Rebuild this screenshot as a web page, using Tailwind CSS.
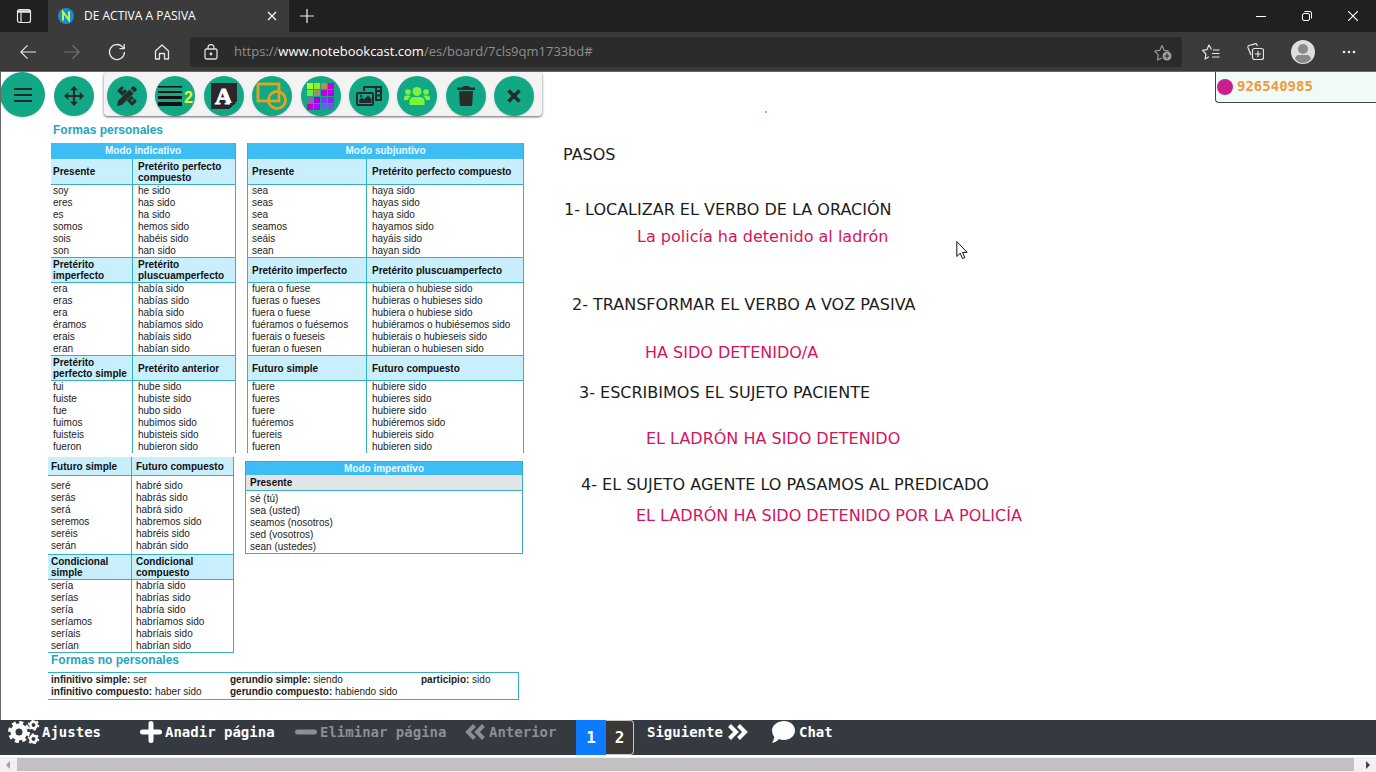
<!DOCTYPE html>
<html lang="es">
<head>
    <meta charset="UTF-8">
    <meta name="viewport" content="width=device-width, initial-scale=1.0">
    <title>DE ACTIVA A PASIVA</title>
    <script src="https://cdn.jsdelivr.net/npm/@tailwindcss/browser@4"></script>
</head>
<body class="h-screen flex flex-col overflow-hidden bg-white font-['Open_Sans','Noto_Sans',sans-serif]">

<!-- Tab strip -->
<header class="bg-[#202020] text-white">
    <div class="flex items-stretch h-8">
        <button aria-label="Pestañas verticales" class="w-12 flex items-center justify-center">
            <svg class="size-4" viewBox="0 0 16 16" fill="none" stroke="#e8e8e8" stroke-width="1.2"><rect x="1.5" y="1.5" width="13" height="13" rx="2"/><path d="M1.5 3.500h13" stroke-width="2.500"/><path d="M5 5v9"/></svg>
        </button>
        <div class="w-[241px] bg-[#3b3b3b] flex items-center pl-2.5 pr-3">
            <svg class="size-4 mr-2.5" viewBox="0 0 16 16"><circle cx="8" cy="8" r="8" fill="#1590cf"/><path d="M5 12.500V4l6 8V3.500" fill="none" stroke="#c9f04a" stroke-width="2"/></svg>
            <span class="text-xs flex-1">DE ACTIVA A PASIVA</span>
            <button aria-label="Cerrar pestaña"><svg class="size-2.5" viewBox="0 0 10 10" stroke="#fff" stroke-width="1.3"><path d="M1 1l8 8M9 1L1 9"/></svg></button>
        </div>
        <button aria-label="Nueva pestaña" class="w-9 flex items-center justify-center"><svg class="size-3.5" viewBox="0 0 14 14" stroke="#eee" stroke-width="1.2"><path d="M7 0v14M0 7h14"/></svg></button>
        <div class="ml-auto flex">
            <button aria-label="Minimizar" class="w-[46px] flex items-center justify-center"><svg class="size-2.5" viewBox="0 0 10 10" stroke="#fff"><path d="M0 5.500h10"/></svg></button>
            <button aria-label="Restaurar" class="w-[46px] flex items-center justify-center"><svg class="size-2.5" viewBox="0 0 10 10" fill="none" stroke="#fff"><rect x=".5" y="2.500" width="7" height="7" rx="1.500"/><path d="M2.500 .5H8a1.500 1.500 0 0 1 1.500 1.500v5.500"/></svg></button>
            <button aria-label="Cerrar" class="w-[46px] flex items-center justify-center"><svg class="size-2.5" viewBox="0 0 10 10" stroke="#fff" stroke-width="1.2"><path d="M0 0l10 10M10 0L0 10"/></svg></button>
        </div>
    </div>

    <!-- Address bar -->
    <div class="flex items-center h-10 bg-[#3b3b3b] border-b border-[#666]">
        <nav class="w-[190px] flex items-center gap-7 pl-5">
            <button aria-label="Atrás"><svg class="size-4" viewBox="0 0 16 16" fill="none" stroke="#e6e6e6" stroke-width="1.2"><path d="M16 8H.8M7.500 1.300L.8 8l6.700 6.700"/></svg></button>
            <button aria-label="Adelante" disabled><svg class="size-4" viewBox="0 0 16 16" fill="none" stroke="#777" stroke-width="1.2"><path d="M0 8h15.200M8.500 1.300L15.200 8l-6.700 6.700"/></svg></button>
            <button aria-label="Actualizar"><svg class="size-[18px]" viewBox="0 0 18 18" fill="none" stroke="#e6e6e6" stroke-width="1.3"><path d="M16.500 9a7.500 7.500 0 1 1-2.300-5.400L16 5.500M16.200 1v4.700h-4.700"/></svg></button>
            <button aria-label="Inicio"><svg class="size-4" viewBox="0 0 16 16" fill="none" stroke="#e6e6e6" stroke-width="1.3"><path d="M1.500 7L8 1l6.500 6v8h-4V9.500h-5V15h-4z" stroke-linejoin="round"/></svg></button>
        </nav>
        <div class="flex-1 h-[30px] rounded-sm bg-[#2b2b2b] flex items-center pl-3.5 pr-2.5">
            <svg class="w-3.5 h-4 mr-4" viewBox="0 0 14 16" fill="none" stroke="#ddd" stroke-width="1.3"><rect x="1" y="5" width="12" height="10" rx="1.500"/><path d="M4 5V3.500a3 3 0 0 1 6 0V5"/><circle cx="7" cy="10" r=".8" fill="#ddd"/></svg>
            <a href="#" class="text-[13px] text-[#8f8f8f] flex-1">https://<span class="text-white">www.notebookcast.com</span>/es/board/7cls9qm1733bd#</a>
            <button aria-label="Agregar a favoritos"><svg class="size-[18px]" viewBox="0 0 18 18" fill="none" stroke="#999" stroke-width="1.2"><path d="M8 15l-4.500 2 .8-5.200L.8 8.200l4.900-.8L8 2.500l2.300 4.900 4.500.7" stroke-linejoin="round"/><circle cx="13" cy="13" r="4.500" fill="#a0a0a0" stroke="none"/><path d="M13 10.500v5M10.500 13h5" stroke="#2b2b2b"/></svg></button>
        </div>
        <div class="flex items-center gap-[27px] pl-5 pr-5">
            <button aria-label="Favoritos"><svg class="w-[18px] h-4" viewBox="0 0 18 16" fill="none" stroke="#e6e6e6" stroke-width="1.2"><path d="M9.500 5.500L7 1 5 5.600l-4.500.7L3.900 10l-.8 5L7 12.700M11 6h6.500M10 9.500h7.500M10 13h7.500" stroke-linejoin="round"/></svg></button>
            <button aria-label="Colecciones"><svg class="size-[17px]" viewBox="0 0 17 17" fill="none" stroke="#e6e6e6" stroke-width="1.200"><path d="M4 12L1 4.500Q.5 3 2 2.500L8 .8q1.500-.4 2 1l.5 1.200"/><rect x="5.500" y="5.500" width="11" height="11" rx="2"/><path d="M11 8v6M8 11h6"/></svg></button>
            <button aria-label="Perfil"><svg class="size-6" viewBox="0 0 24 24"><circle cx="12" cy="12" r="12" fill="#dedede"/><circle cx="12" cy="9" r="5" fill="#8a8a8a"/><path d="M4 19q1-4 4-4h8q3 0 4 4-3.500 4-8 4t-8-4z" fill="#8a8a8a"/></svg></button>
            <button aria-label="Más"><svg class="w-3.5 h-4" viewBox="0 0 14 16" fill="#eee"><circle cx="2" cy="8" r="1.300"/><circle cx="7" cy="8" r="1.300"/><circle cx="12" cy="8" r="1.300"/></svg></button>
        </div>
    </div>
</header>

<main class="relative flex-1 min-h-0 border-l border-[#666] bg-white overflow-hidden">
    <!-- Drawing tools -->
    <div class="flex items-start -ml-px">
        <button aria-label="Menú" class="size-[45px] rounded-full bg-[#12a785] shadow flex items-center justify-center">
            <svg class="w-[18px] h-4" viewBox="0 0 18 16" stroke="#222b2b" stroke-width="2.200"><path d="M0 2h18M0 8h18M0 14h18"/></svg>
        </button>
        <button aria-label="Mover" class="size-10 mt-1 ml-[9px] mr-2.5 rounded-full bg-[#12a785] shadow flex items-center justify-center">
            <svg class="size-5" viewBox="0 0 20 20" fill="#222b2b"><path d="M10 0l4 4.300h-2.900v4.600h4.600V6L20 10l-4.300 4v-2.900h-4.600v4.600H14L10 20l-4-4.300h2.900v-4.600H4.300V14L0 10l4.300-4v2.900h4.600V4.300H6z"/></svg>
        </button>
        <div class="w-[438px] h-11 flex items-center justify-between pt-1 pl-[3px] pr-2 bg-[#f3f3f3] rounded-sm shadow-sm shadow-black/50">
            <button aria-label="Lápiz" class="size-10 rounded-full bg-[#12a785] shadow flex items-center justify-center">
                <svg class="size-5" viewBox="0 0 20 20" fill="#2b2b2b"><path d="M0 20l1.200-5.200L12.600 3.400l4 4L5.200 18.800z"/><path d="M13.600 2.400L15.200.8q1.200-1.200 2.400 0l1.600 1.600q1.200 1.200 0 2.400l-1.600 1.600z"/><path d="M.8 4L4 .8q.8-.8 1.600 0l1.300 1.300-2.200 2.200 1 1L7.900 3.100l2.200 2.200-4.700 4.700L.8 5.600Q0 4.800.8 4zM14.700 9.900l4.500 4.500q.8.800 0 1.600L16 19.200q-.8.800-1.600 0l-4.500-4.500 2.200-2.200"/><path d="M16.800 12.800l-2.700 2.700" stroke="#12a785" stroke-width="1.300"/></svg>
            </button>
            <button aria-label="Grosor 2" class="size-10 rounded-full bg-[#12a785] shadow flex items-center justify-center gap-0.5">
                <svg class="w-6 h-5 shrink-0" viewBox="0 0 24 20" fill="#111"><path d="M0 0h24v1.500H0zM0 5h24v2H0zM0 10h24v3H0zM0 16h24v4H0z"/></svg>
                <span class="font-['Liberation_Sans',sans-serif] font-bold text-base text-[#e2ff20] pt-1">2</span>
            </button>
            <button aria-label="Texto" class="size-10 rounded-full bg-[#12a785] shadow flex items-center justify-center">
                <span class="relative size-[26px] bg-[#2b262a] text-white font-['Liberation_Serif',serif] font-bold text-2xl leading-[26px] [-webkit-text-stroke:1px_white]">A<svg class="absolute right-0 bottom-0 size-2" viewBox="0 0 8 8"><path d="M8 0v8H0z" fill="#12a785"/><path d="M1 7V2h6z" fill="#2b262a"/></svg></span>
            </button>
            <button aria-label="Formas" class="size-10 rounded-full bg-[#12a785] shadow flex items-center justify-center">
                <svg class="w-8 h-7" viewBox="0 0 32 28" fill="none" stroke="#dfa51c" stroke-width="2.800"><rect x="2" y="2" width="21" height="17"/><circle cx="21" cy="18" r="8.500"/></svg>
            </button>
            <button aria-label="Color" class="size-10 rounded-full bg-[#12a785] shadow flex items-center justify-center">
                <span class="grid grid-cols-4 gap-px">
                    <i class="size-1.5 bg-[#a4ff28]"></i><i class="size-1.5 bg-[#8cf020]"></i><i class="size-1.5 bg-[#b09050]"></i><i class="size-1.5 bg-[#c800d0]"></i>
                    <i class="size-1.5 bg-[#60f040]"></i><i class="size-1.5 bg-[#a09060]"></i><i class="size-1.5 bg-[#b800e0]"></i><i class="size-1.5 bg-[#b000e8]"></i>
                    <i class="size-1.5 bg-[#7870a0]"></i><i class="size-1.5 bg-[#a000f0]"></i><i class="size-1.5 bg-[#7040f0]"></i><i class="size-1.5 bg-[#9020f0]"></i>
                    <i class="size-1.5 bg-[#c000c8]"></i><i class="size-1.5 bg-[#a010f0]"></i><i class="size-1.5 bg-[#5070e0]"></i><i class="size-1.5 bg-[#6060d0]"></i>
                </span>
            </button>
            <button aria-label="Imágenes" class="size-10 rounded-full bg-[#12a785] shadow flex items-center justify-center">
                <svg class="w-[26px] h-5" viewBox="0 0 26 20" fill="none" stroke="#222b2b" stroke-width="2"><path d="M8 5V1h17v13h-6M20 1v13M20 5h5M20 9.500h5"/><rect x="1" y="7" width="16" height="12" rx="1"/><path d="M3 17v-3l3-2.500 2 2 4-4 3.500 3.500v4z" fill="#222b2b" stroke="none"/><circle cx="5" cy="10" r="1.200" fill="#222b2b" stroke="none"/></svg>
            </button>
            <button aria-label="Usuarios" class="size-10 rounded-full bg-[#12a785] shadow flex items-center justify-center">
                <svg class="w-[26px] h-[18px]" viewBox="0 0 26 18" fill="#7cf43a"><circle cx="13" cy="4.500" r="4.500"/><path d="M5.500 18v-3q0-5 4.500-5h6q4.500 0 4.500 5v3z"/><circle cx="4" cy="5" r="2.800"/><circle cx="22" cy="5" r="2.800"/><path d="M0 13v-2q0-2.500 2.500-2.500H6q1 0 1 .5-2.500 1.500-2.700 4zM26 13v-2q0-2.500-2.500-2.500H20q-1 0-1 .5 2.500 1.500 2.700 4z"/></svg>
            </button>
            <button aria-label="Borrar" class="size-10 rounded-full bg-[#12a785] shadow flex items-center justify-center">
                <svg class="w-[18px] h-5" viewBox="0 0 18 20" fill="#2b2b2b"><path d="M0 1.500h5L6.500 0h5L13 1.500h5V4H0zM2 5h14l-.8 13.500q-.1 1.500-1.500 1.500H4.300q-1.400 0-1.500-1.500z"/></svg>
            </button>
            <button aria-label="Cerrar herramientas" class="size-10 rounded-full bg-[#12a785] shadow flex items-center justify-center">
                <svg class="size-3.5" viewBox="0 0 14 14" stroke="#222b2b" stroke-width="3.500"><path d="M1.500 1.500l11 11M12.500 1.500l-11 11"/></svg>
            </button>
        </div>
    </div>

    <!-- Conjugation chart for "ser" -->
    <section class="w-[476px] ml-[47px] pt-1.5 font-['Liberation_Sans',sans-serif] text-[10px] leading-3 text-[#222]">
        <h2 class="pl-[5px] h-5 leading-[14px] text-xs font-bold text-[#22a5bf]">Formas personales</h2>
        <div class="flex justify-between pl-[3px]">
            <table id="indicativo" class="w-[185px] table-fixed border-separate border-spacing-0 border-r border-[#35b0c0]"></table>
            <table id="subjuntivo" class="w-[277px] table-fixed border-separate border-spacing-0 border-x border-[#35b0c0]"></table>
        </div>
        <div class="flex justify-between items-start pt-1">
            <table id="indicativo2" class="w-[186px] table-fixed border-separate border-spacing-0 border-r border-b border-[#35b0c0]"></table>
            <table id="imperativo" class="w-[278px] mt-1 mr-px table-fixed border-separate border-spacing-0 border border-[#35b0c0]"></table>
        </div>
        <h2 class="pl-[3px] h-[19px] leading-[14px] text-xs font-bold text-[#22a5bf]">Formas no personales</h2>
        <div class="w-[471px] grid grid-cols-[179px_191px_1fr] py-px pl-[3px] border-y border-r border-[#35b0c0]">
            <p><b>infinitivo simple:</b> ser</p>
            <p><b>gerundio simple:</b> siendo</p>
            <p><b>participio:</b> sido</p>
            <p><b>infinitivo compuesto:</b> haber sido</p>
            <p><b>gerundio compuesto:</b> habiendo sido</p>
        </div>
    </section>

    <!-- Notes placed on the board -->
    <div class="font-['DejaVu_Sans',sans-serif] text-base leading-5 text-[#1c1c1c] whitespace-nowrap">
        <p class="absolute left-[562px] top-[73px]">PASOS</p>
        <p class="absolute left-[563px] top-[128px]">1- LOCALIZAR EL VERBO DE LA ORACIÓN</p>
        <p class="absolute left-[636px] top-[155px] text-[#d4145f]">La policía ha detenido al ladrón</p>
        <p class="absolute left-[571px] top-[223px]">2- TRANSFORMAR EL VERBO A VOZ PASIVA</p>
        <p class="absolute left-[644px] top-[271px] text-[#d4145f]">HA SIDO DETENIDO/A</p>
        <p class="absolute left-[578px] top-[311px]">3- ESCRIBIMOS EL SUJETO PACIENTE</p>
        <p class="absolute left-[645px] top-[357px] text-[#d4145f]">EL LADRÓN HA SIDO DETENIDO</p>
        <p class="absolute left-[580px] top-[403px]">4- EL SUJETO AGENTE LO PASAMOS AL PREDICADO</p>
        <p class="absolute left-[635px] top-[434px] text-[#d4145f]">EL LADRÓN HA SIDO DETENIDO POR LA POLICÍA</p>
    </div>
    <span class="absolute left-[764px] top-[39px] size-0.5 rounded-full bg-[#4fb3a0]"></span>
    <svg class="absolute left-[955px] top-[168px] w-3 h-5" viewBox="0 0 12 20" fill="#fff" stroke="#111"><path d="M.8 1.500v15l3.400-3.300 2.300 5.400 2.300-1-2.300-5.200h4.600z"/></svg>

    <!-- Connected user -->
    <aside class="absolute right-0 top-0 w-[161px] h-[31px] border border-t-0 border-r-0 border-[#444] rounded-bl bg-[#f0faf6] flex items-start gap-1 pl-px pt-[5px]">
        <span class="size-4 mt-0.5 rounded-full bg-[#c9208c]"></span>
        <span class="font-['DejaVu_Sans_Mono',monospace] font-bold text-sm leading-[18px] text-[#f09a3e]">926540985</span>
    </aside>
</main>

<!-- Page controls -->
<footer class="font-['DejaVu_Sans_Mono',monospace]">
    <div class="h-[35px] bg-[#343a40] flex items-start text-white text-sm font-bold leading-6">
        <button class="flex items-center w-[132px] ml-2 gap-0.5">
            <svg class="w-8 h-6 shrink-0" viewBox="0 0 32 24" fill="none" stroke="#fff"><circle cx="11" cy="12" r="6" stroke-width="5"/><circle cx="11" cy="12" r="9.500" stroke-width="3" stroke-dasharray="4 3.460"/><circle cx="25.500" cy="5" r="3.200" stroke-width="2.500"/><circle cx="25.500" cy="5" r="5" stroke-width="1.500" stroke-dasharray="2.200 3.036"/><circle cx="25.500" cy="19" r="3.200" stroke-width="2.500"/><circle cx="25.500" cy="19" r="5" stroke-width="1.500" stroke-dasharray="2.200 3.036"/></svg>Ajustes
        </button>
        <button class="flex items-center w-[155px] gap-[3px]">
            <svg class="size-[22px] shrink-0" viewBox="0 0 22 22" stroke="#fff" stroke-width="5" stroke-linecap="round"><path d="M11 2.500v17M2.500 11h17"/></svg>Anadir página
        </button>
        <button disabled class="flex items-center w-[170px] gap-[3px] text-[#8b8f93]">
            <svg class="size-[22px] shrink-0" viewBox="0 0 22 22" stroke="#8b8f93" stroke-width="5" stroke-linecap="round"><path d="M2.500 11h17"/></svg>Eliminar página
        </button>
        <button disabled class="flex items-center w-[111px] gap-1 text-[#8b8f93]">
            <svg class="w-5 h-4 shrink-0" viewBox="0 0 20 16" fill="none" stroke="#8b8f93" stroke-width="4"><path d="M9.500 1.500L3 8l6.500 6.500M18.500 1.500L12 8l6.500 6.500"/></svg>Anterior
        </button>
        <button class="w-[30px] h-[35px] bg-[#0d7bff] text-base leading-[35px]">1</button>
        <button class="w-7 h-[35px] bg-[#3a3837] border border-l-0 border-[#c8c8c8] rounded-r text-base leading-[33px]">2</button>
        <button class="flex items-center gap-1 ml-[13px] w-[124px]">
            Siguiente<svg class="w-[22px] h-4 shrink-0" viewBox="0 0 20 16" fill="none" stroke="#fff" stroke-width="4"><path d="M1.500 1.500L8 8l-6.500 6.500M10.500 1.500L17 8l-6.500 6.500"/></svg>
        </button>
        <button class="flex items-center gap-1">
            <svg class="w-6 h-[22px] shrink-0" viewBox="0 0 24 22" fill="#fff"><path d="M13 0C19 0 24 4 24 9.500S19 19 13 19q-3 0-5-1-3 3.500-7 3.700 2-2.500 2.300-5.700Q1 13 1 9.500C1 4 7 0 13 0z"/></svg>Chat
        </button>
    </div>
    <div class="flex items-center h-[17px] bg-[#f1f1f1] border-t-2 border-white">
        <svg class="w-[17px] h-2 shrink-0" viewBox="0 0 17 8" fill="#a3a3a3"><path d="M10 0v8L6 4z"/></svg>
        <div class="flex-1 h-[13px] bg-[#c1c1c1]"></div>
        <svg class="w-[22px] h-2 shrink-0" viewBox="0 0 22 8" fill="#444"><path d="M12 0v8l4-4z"/></svg>
    </div>
</footer>

<script>
    const charts = {
        indicativo: {
            title: 'Modo indicativo', widths: ['82px', '102px'], pad: 'pl-0.5', second: 'pl-[5px]',
            groups: [
                ['Presente', 'Pretérito perfecto<br>compuesto', 'soy,eres,es,somos,sois,son', 'he sido,has sido,ha sido,hemos sido,habéis sido,han sido'],
                ['Pretérito<br>imperfecto', 'Pretérito<br>pluscuamperfecto', 'era,eras,era,éramos,erais,eran', 'había sido,habías sido,había sido,habíamos sido,habíais sido,habían sido'],
                ['Pretérito<br>perfecto simple', 'Pretérito anterior', 'fui,fuiste,fue,fuimos,fuisteis,fueron', 'hube sido,hubiste sido,hubo sido,hubimos sido,hubisteis sido,hubieron sido'],
            ],
        },
        subjuntivo: {
            title: 'Modo subjuntivo', widths: ['119px', '156px'], pad: 'pl-1', second: 'pl-[5px]',
            groups: [
                ['Presente', 'Pretérito perfecto compuesto', 'sea,seas,sea,seamos,seáis,sean', 'haya sido,hayas sido,haya sido,hayamos sido,hayáis sido,hayan sido'],
                ['Pretérito imperfecto', 'Pretérito pluscuamperfecto', 'fuera o fuese,fueras o fueses,fuera o fuese,fuéramos o fuésemos,fuerais o fueseis,fueran o fuesen', 'hubiera o hubiese sido,hubieras o hubieses sido,hubiera o hubiese sido,hubiéramos o hubiésemos sido,hubierais o hubieseis sido,hubieran o hubiesen sido'],
                ['Futuro simple', 'Futuro compuesto', 'fuere,fueres,fuere,fuéremos,fuereis,fueren', 'hubiere sido,hubieres sido,hubiere sido,hubiéremos sido,hubiereis sido,hubieren sido'],
            ],
        },
        indicativo2: {
            widths: ['84px', '101px'], pad: 'pl-[3px]', second: 'pl-1',
            groups: [
                ['Futuro simple', 'Futuro compuesto', 'seré,serás,será,seremos,seréis,serán', 'habré sido,habrás sido,habrá sido,habremos sido,habréis sido,habrán sido'],
                ['Condicional<br>simple', 'Condicional<br>compuesto', 'sería,serías,sería,seríamos,seríais,serían', 'habría sido,habrías sido,habría sido,habríamos sido,habríais sido,habrían sido'],
            ],
        },
        imperativo: {
            title: 'Modo imperativo', widths: ['276px'], pad: 'pl-1',
            groups: [['Presente', null, 'sé (tú),sea (usted),seamos (nosotros),sed (vosotros),sean (ustedes)', '']],
        },
    };

    for (const [id, chart] of Object.entries(charts)) {
        const single = chart.widths.length === 1;
        let html = '<colgroup>' + chart.widths.map(w => `<col style="width:${w}">`).join('') + '</colgroup>';
        if (chart.title) {
            const size = single ? 'h-[13px]' : 'h-4';
            html += `<thead><tr><th colspan="${chart.widths.length}" class="${size} leading-3 bg-[#3dbdf5] text-[#eafaff] p-0">${chart.title}</th></tr></thead>`;
        }
        chart.groups.forEach(([left, right, a, b], i) => {
            const short = id === 'indicativo2' && i === 0;
            const height = single ? 'h-4' : short ? 'h-[19px]' : 'h-[26px]';
            const fill = single ? 'bg-[#e3e4e6]' : 'bg-[#c8effb]';
            const top = short || (i === 0 && chart.title) ? '' : 'border-t';
            const divider = single ? '' : 'border-r';
            const head = `${height} ${fill} ${top} border-b border-[#35b0c0] p-0 text-left align-middle leading-[11px] text-[#111]`;
            html += `<tbody><tr><th class="${head} ${divider} ${chart.pad}">${left}</th>`;
            html += (right ? `<th class="${head} ${chart.second}">${right}</th>` : '') + '</tr>';
            const seconds = b.split(',');
            const verbs = a.split(',');
            verbs.forEach((verb, n) => {
                let space = '';
                if (n === 0) space = short ? 'pt-1' : single ? 'pt-0.5' : '';
                if (short && n === verbs.length - 1) space = 'pb-0.5';
                html += `<tr><td class="p-0 ${divider} border-[#35b0c0] ${chart.pad} ${space}">${verb}</td>`;
                html += (right ? `<td class="p-0 ${chart.second} ${space}">${seconds[n]}</td>` : '') + '</tr>';
            });
            html += '</tbody>';
        });
        document.getElementById(id).innerHTML = html;
    }
</script>
</body>
</html>
